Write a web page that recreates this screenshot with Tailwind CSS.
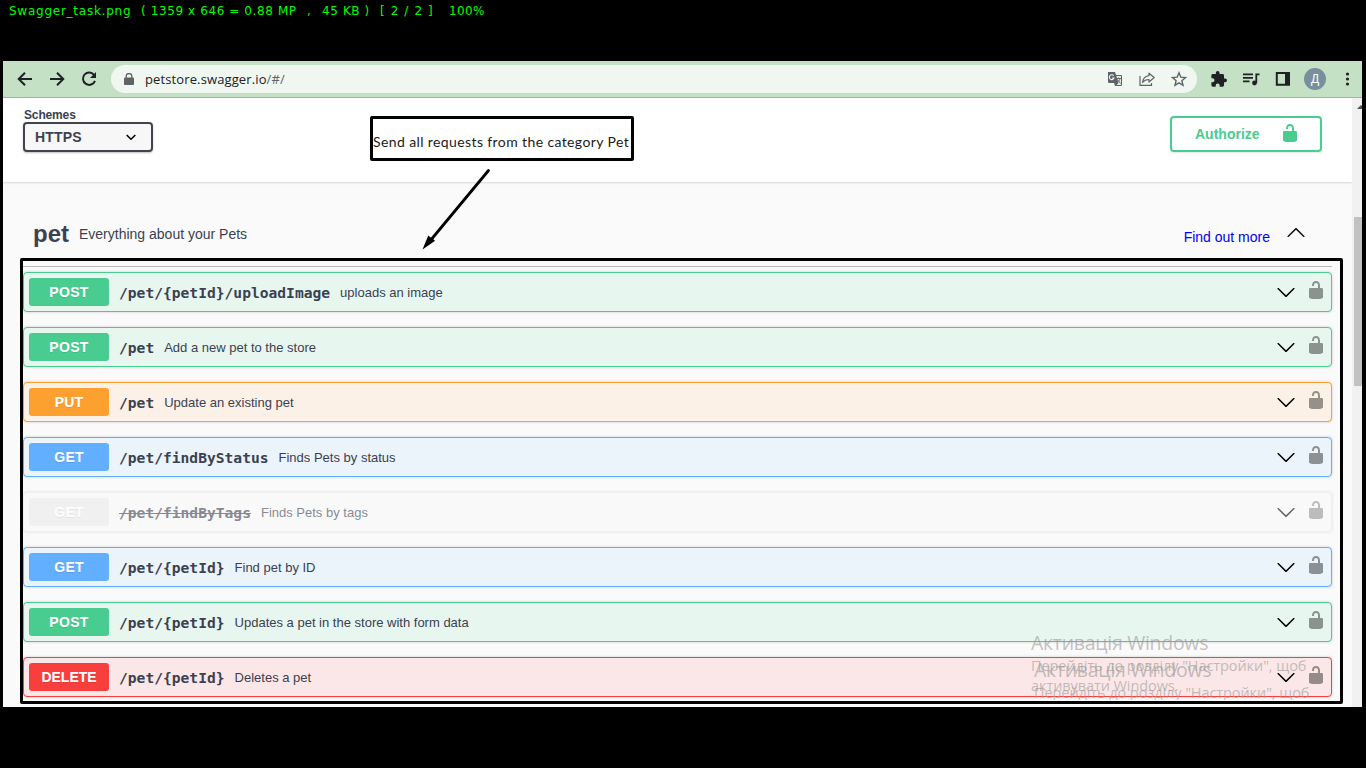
<!DOCTYPE html>
<html lang="en">
<head>
<meta charset="utf-8">
<title>Swagger_task.png</title>
<script src="https://cdn.jsdelivr.net/npm/@tailwindcss/browser@4"></script>
</head>
<body class="h-screen overflow-hidden bg-black font-['Liberation_Sans',sans-serif] text-[#3b4151]">
<svg class="hidden">
  <symbol id="unlock" viewBox="0 0 20 20"><path d="M15.8 8H14V5.6C14 2.703 12.665 1 10 1 7.334 1 6 2.703 6 5.6V6h2v-.801C8 3.754 8.797 3 10 3c1.203 0 2 .754 2 2.199V8H4c-.553 0-1 .646-1 1.199V17c0 .549.428 1.139.951 1.307l1.197.387C5.672 18.861 6.55 19 7.1 19h5.8c.549 0 1.428-.139 1.951-.307l1.196-.387c.524-.167.953-.757.953-1.306V9.199C17 8.646 16.352 8 15.8 8z"/></symbol>
  <symbol id="chev" viewBox="0 0 20 20"><path d="M17.418 6.109c.272-.268.709-.268.979 0s.271.701 0 .969l-7.908 7.83c-.27.268-.707.268-.979 0l-7.908-7.83c-.27-.268-.27-.701 0-.969.271-.268.709-.268.979 0L10 13.25l7.418-7.141z"/></symbol>
</svg>
<div class="flex h-[61px] items-start whitespace-pre pl-[9px] pt-[3px] font-['DejaVu_Sans',sans-serif] text-[12px] leading-4 text-[#00ff00]"><span class="w-[132px] tracking-[0.75px]">Swagger_task.png</span><span class="w-[166px] tracking-[0.6px]">( 1359 x 646 = 0.88 MP</span><span class="w-[15px]">,</span><span class="w-[58px] tracking-[0.6px]">45 KB )</span><span class="w-[69px] tracking-[1.1px]">[ 2 / 2 ]</span><span class="tracking-[0.4px]">100%</span></div>

<div class="relative ml-[3px] flex h-[646px] w-[1359px] flex-col overflow-hidden bg-[#fafafa]">
  <div class="flex h-[37px] shrink-0 items-center border-b border-[#9eb79f] bg-[#c5e1c5] text-[#202124]">
    <svg class="ml-3.5 size-4 shrink-0" viewBox="0 0 16 16" fill="none" stroke="currentColor" stroke-width="2"><path d="M15 8H2M8 1.7 1.7 8 8 14.3"/></svg>
    <svg class="ml-4 size-4 shrink-0" viewBox="0 0 16 16" fill="none" stroke="currentColor" stroke-width="2"><path d="M1 8h13M8 1.7 14.3 8 8 14.3"/></svg>
    <svg class="ml-4 size-4 shrink-0" viewBox="0 0 16 16" fill="none" stroke="currentColor" stroke-width="2"><path d="M13.3 4.2A6.2 6.2 0 1 0 14 9.8"/><path d="M15 1v6H9z" fill="currentColor" stroke="none"/></svg>
    <div class="ml-[14px] flex h-7 w-[1086px] items-center rounded-full bg-[#f0f7f1]">
      <svg class="ml-[13px] h-3 w-[10px]" viewBox="0 0 10 12" fill="#5f6368"><path d="M1 4.5h8q1 0 1 1V11q0 1-1 1H1q-1 0-1-1V5.500q0-1 1-1z"/><path d="M2.200 5V3a2.800 2.500 0 0 1 5.600 0v2" fill="none" stroke="#5f6368" stroke-width="1.300"/></svg>
      <div class="ml-[11px] w-[200px] pt-[2px] font-['Open_Sans',sans-serif] text-[13px] tracking-[0.12px]">petstore.swagger.io<span class="text-[#5f6368]">/#/</span></div>
      <div class="ml-auto mr-[10px] flex items-center gap-4 text-[#5f6368]">
        <svg class="size-4" viewBox="0 0 16 16"><path d="M1 1h7l1 3h5q1 0 1 1v9q0 1-1 1H8l-1-3H2q-1 0-1-1z" fill="currentColor"/><path d="M9.300 5H14v9H9.500l2-2z" fill="#e5ece6"/><path d="M6.700 4.800A2.400 2.400 0 1 0 7 7H4.900" fill="none" stroke="#f0f7f1" stroke-width="1.100"/><path d="M9.500 7.500H14M11.700 6.500v1M13 7.500c-.5 2-1.500 3-3 4M10.500 8.500l3 4" fill="none" stroke="currentColor" stroke-width=".9"/></svg>
        <svg class="size-4" viewBox="0 0 16 16" fill="none" stroke="currentColor" stroke-width="1.200"><path d="M1 5v9.400h11.500V12"/><path d="M10 2.200 15.200 6.500 10 11V8.500C7 8.500 5 9.500 3.500 11.300 4 7.500 6.200 5 10 4.600z" stroke-linejoin="round"/></svg>
        <svg class="size-4" viewBox="0 0 16 16" fill="none" stroke="currentColor" stroke-width="1.400"><path d="m8 1.800 1.800 4.400 4.700.4-3.600 3.100 1.100 4.600L8 11.800l-4 2.500 1.100-4.600-3.600-3.100 4.700-.4z"/></svg>
      </div>
    </div>
    <svg class="ml-[14px] size-4 shrink-0" viewBox="1.500 1 21.500 21.500" fill="currentColor"><path d="M20.500 11H19V7a2 2 0 0 0-2-2h-4V3.500a2.500 2.500 0 0 0-5 0V5H4a2 2 0 0 0-2 2v3.800h1.500a2.700 2.700 0 0 1 0 5.400H2V20a2 2 0 0 0 2 2h3.800v-1.500a2.700 2.700 0 0 1 5.400 0V22H17a2 2 0 0 0 2-2v-4h1.500a2.500 2.500 0 0 0 0-5z"/></svg>
    <svg class="ml-4 h-4 w-[17px] shrink-0" viewBox="0 0 17 16" fill="none" stroke="currentColor" stroke-width="1.700"><path d="M0 3.300h10M0 6.800h10M0 10.300h6.500"/><path d="M16.500 3.300h-3.200V12" stroke-width="1.800"/><circle cx="11.500" cy="12" r="2.400" fill="currentColor" stroke="none"/></svg>
    <svg class="ml-[15px] size-4 shrink-0" viewBox="0 0 16 16"><path d="M1.800 2.100H14v11.700H1.800z" fill="none" stroke="currentColor" stroke-width="2"/><path d="M10 2h4v12h-4z" fill="currentColor"/></svg>
    <div class="ml-[13px] flex size-[22px] shrink-0 items-center justify-center rounded-full bg-[#78909c] text-[12px] text-white">Д</div>
    <svg class="ml-[13px] h-4 w-[17px] shrink-0" viewBox="0 0 17 16" fill="currentColor"><circle cx="8.500" cy="3" r="1.600"/><circle cx="8.500" cy="8" r="1.600"/><circle cx="8.500" cy="13" r="1.600"/></svg>
  </div>

  <div class="flex min-h-0 flex-1">
    <main class="flex w-[1349px] flex-col">
      <header class="flex h-[84px] shrink-0 items-start justify-between bg-white pl-5 pr-[30px] shadow-[0_1px_2px_rgba(0,0,0,0.15)]">
        <div class="pt-[10px]">
          <div class="pl-[1px] text-[12px] font-bold leading-[14px] tracking-[-0.15px]">Schemes</div>
          <div class="flex h-[30px] w-[130px] items-center justify-between rounded border-2 border-[#41444e] bg-[#f7f7f7] pl-[10px] pr-[14px] text-[14px] font-bold shadow-[0_1px_2px_rgba(0,0,0,0.25)]"><span class="tracking-[0.15px]">HTTPS</span><svg class="size-3" viewBox="0 0 12 12" fill="none" stroke="#000" stroke-width="1.600"><path d="m1.700 4 4.300 4.200L10.300 4"/></svg></div>
        </div>
        <div class="mt-[18px] flex h-9 w-[152px] items-center rounded border-2 border-[#49cc90] pl-[23px] text-[14px] font-bold text-[#49cc90] shadow-[0_1px_2px_rgba(0,0,0,0.1)]"><span class="w-[85px]">Authorize</span><svg class="size-5 -translate-y-px" fill="currentColor"><use href="#unlock"/></svg></div>
      </header>
      <div class="flex h-[84px] shrink-0 items-center pl-[30px] pr-[46px] pt-[18px]">
        <h3 class="w-[46px] pt-[2px] text-[24px] font-bold leading-8">pet</h3>
        <span class="pt-[2px] text-[14px]">Everything about your Pets</span>
        <span class="ml-auto mr-[16px] mt-[8px] text-[14px] text-[#0000ee]">Find out more</span>
        <svg class="size-5 rotate-180" fill="#111"><use href="#chev"/></svg>
      </div>
      <section id="ops" class="ml-5 mr-5 flex flex-col gap-[15px] border-t border-[#b9bac0] pt-[5px]"></section>
    </main>
    <aside class="flex w-[10px] flex-col bg-[#f1f1f1]">
      <svg class="mt-[5px] h-[6px] w-[10px] shrink-0" viewBox="0 0 10 6"><path d="M5 6 9 2l1 1v3z" fill="#505050"/></svg>
      <div class="ml-[2px] mt-[108px] h-[169px] bg-[#c1c1c1]"></div>
    </aside>
  </div>

  <div class="absolute left-[367px] top-[55px] flex h-[45px] w-[264px] items-center whitespace-nowrap rounded-[2px] border-3 border-black pt-[6px] font-['Lato',sans-serif] text-[14px] text-[#1a1a1a]"><span class="tracking-[0.39px]">Send all requests from the category Pet</span></div>
  <svg class="absolute left-[417px] top-[105px] h-[86px] w-[75px]" viewBox="420 166 75 86"><path d="M488.500 170.500 430 241" stroke="#000" stroke-width="2.800" stroke-linecap="round"/><path d="m422.500 249.500 5.800-14 1.700 1.500 5 3.500-1 1z"/></svg>
  <div class="absolute left-[17px] top-[197px] h-[446px] w-[1323px] rounded-[2px] border-3 border-black"></div>
  <div class="absolute left-[1028px] top-[569px] whitespace-nowrap font-['Open_Sans',sans-serif] text-[#999]/60">
    <div class="text-[19.500px] leading-[26px] tracking-[-0.28px]">Активація Windows</div>
    <div class="text-[14.500px] leading-5 tracking-[-0.08px]">Перейдіть до розділу "Настройки", щоб<br>активувати Windows.</div>
  </div>
  <div class="absolute left-[1031px] top-[596px] h-[43px] overflow-hidden whitespace-nowrap font-['Open_Sans',sans-serif] text-[#999]/60">
    <div class="text-[19.500px] leading-[26px] tracking-[-0.28px]">Активація Windows</div>
    <div class="text-[14.500px] leading-5 tracking-[-0.08px]">Перейдіть до розділу "Настройки", щоб</div>
  </div>
</div>
<script>
const styles = {
  POST: ['border-[#49cc90] bg-[#e8f6f0]', 'bg-[#49cc90]'],
  PUT: ['border-[#fca130] bg-[#fbf1e6]', 'bg-[#fca130]'],
  GET: ['border-[#61affe] bg-[#ebf3fb]', 'bg-[#61affe]'],
  DELETE: ['border-[#f93e3e] bg-[#fbe7e7]', 'bg-[#f93e3e]'],
  OLD: ['border-[#ebebeb] bg-[#f9f9f9] opacity-60', 'bg-[#ebebeb]']
};
const rows = [
  ['POST', '/pet/{petId}/uploadImage', 'uploads an image'],
  ['POST', '/pet', 'Add a new pet to the store'],
  ['PUT', '/pet', 'Update an existing pet'],
  ['GET', '/pet/findByStatus', 'Finds Pets by status'],
  ['OLD', '/pet/findByTags', 'Finds Pets by tags'],
  ['GET', '/pet/{petId}', 'Find pet by ID'],
  ['POST', '/pet/{petId}', 'Updates a pet in the store with form data'],
  ['DELETE', '/pet/{petId}', 'Deletes a pet']
];
document.getElementById('ops').innerHTML = rows.map(([m, path, text]) => `
  <div class="flex h-10 shrink-0 items-center rounded border pl-[5px] pr-[5px] shadow-[0_0_3px_rgba(0,0,0,0.19)] ${styles[m][0]}">
    <div class="flex h-7 w-20 items-center justify-center rounded-[3px] text-[14px] font-bold text-white [text-shadow:0_1px_0_rgba(0,0,0,0.1)] ${styles[m][1]}"><span class="${m === 'POST' ? 'tracking-[0.3px]' : m === 'DELETE' ? '' : 'tracking-[0.2px]'}">${m === 'OLD' ? 'GET' : m}</span></div>
    <div class="ml-[10px] mt-[2px] font-['DejaVu_Sans_Mono',monospace] text-[14.620px] font-bold leading-5 ${m === 'OLD' ? 'line-through' : ''}">${path}</div>
    <div class="ml-[10px] pt-[2px] text-[13px]">${text}</div>
    <svg class="ml-auto size-5" fill="#000"><use href="#chev"/></svg>
    <svg class="ml-[10px] size-5 -translate-y-[2px] opacity-40" fill="#000"><use href="#unlock"/></svg>
  </div>`).join('');
</script>
</body>
</html>
